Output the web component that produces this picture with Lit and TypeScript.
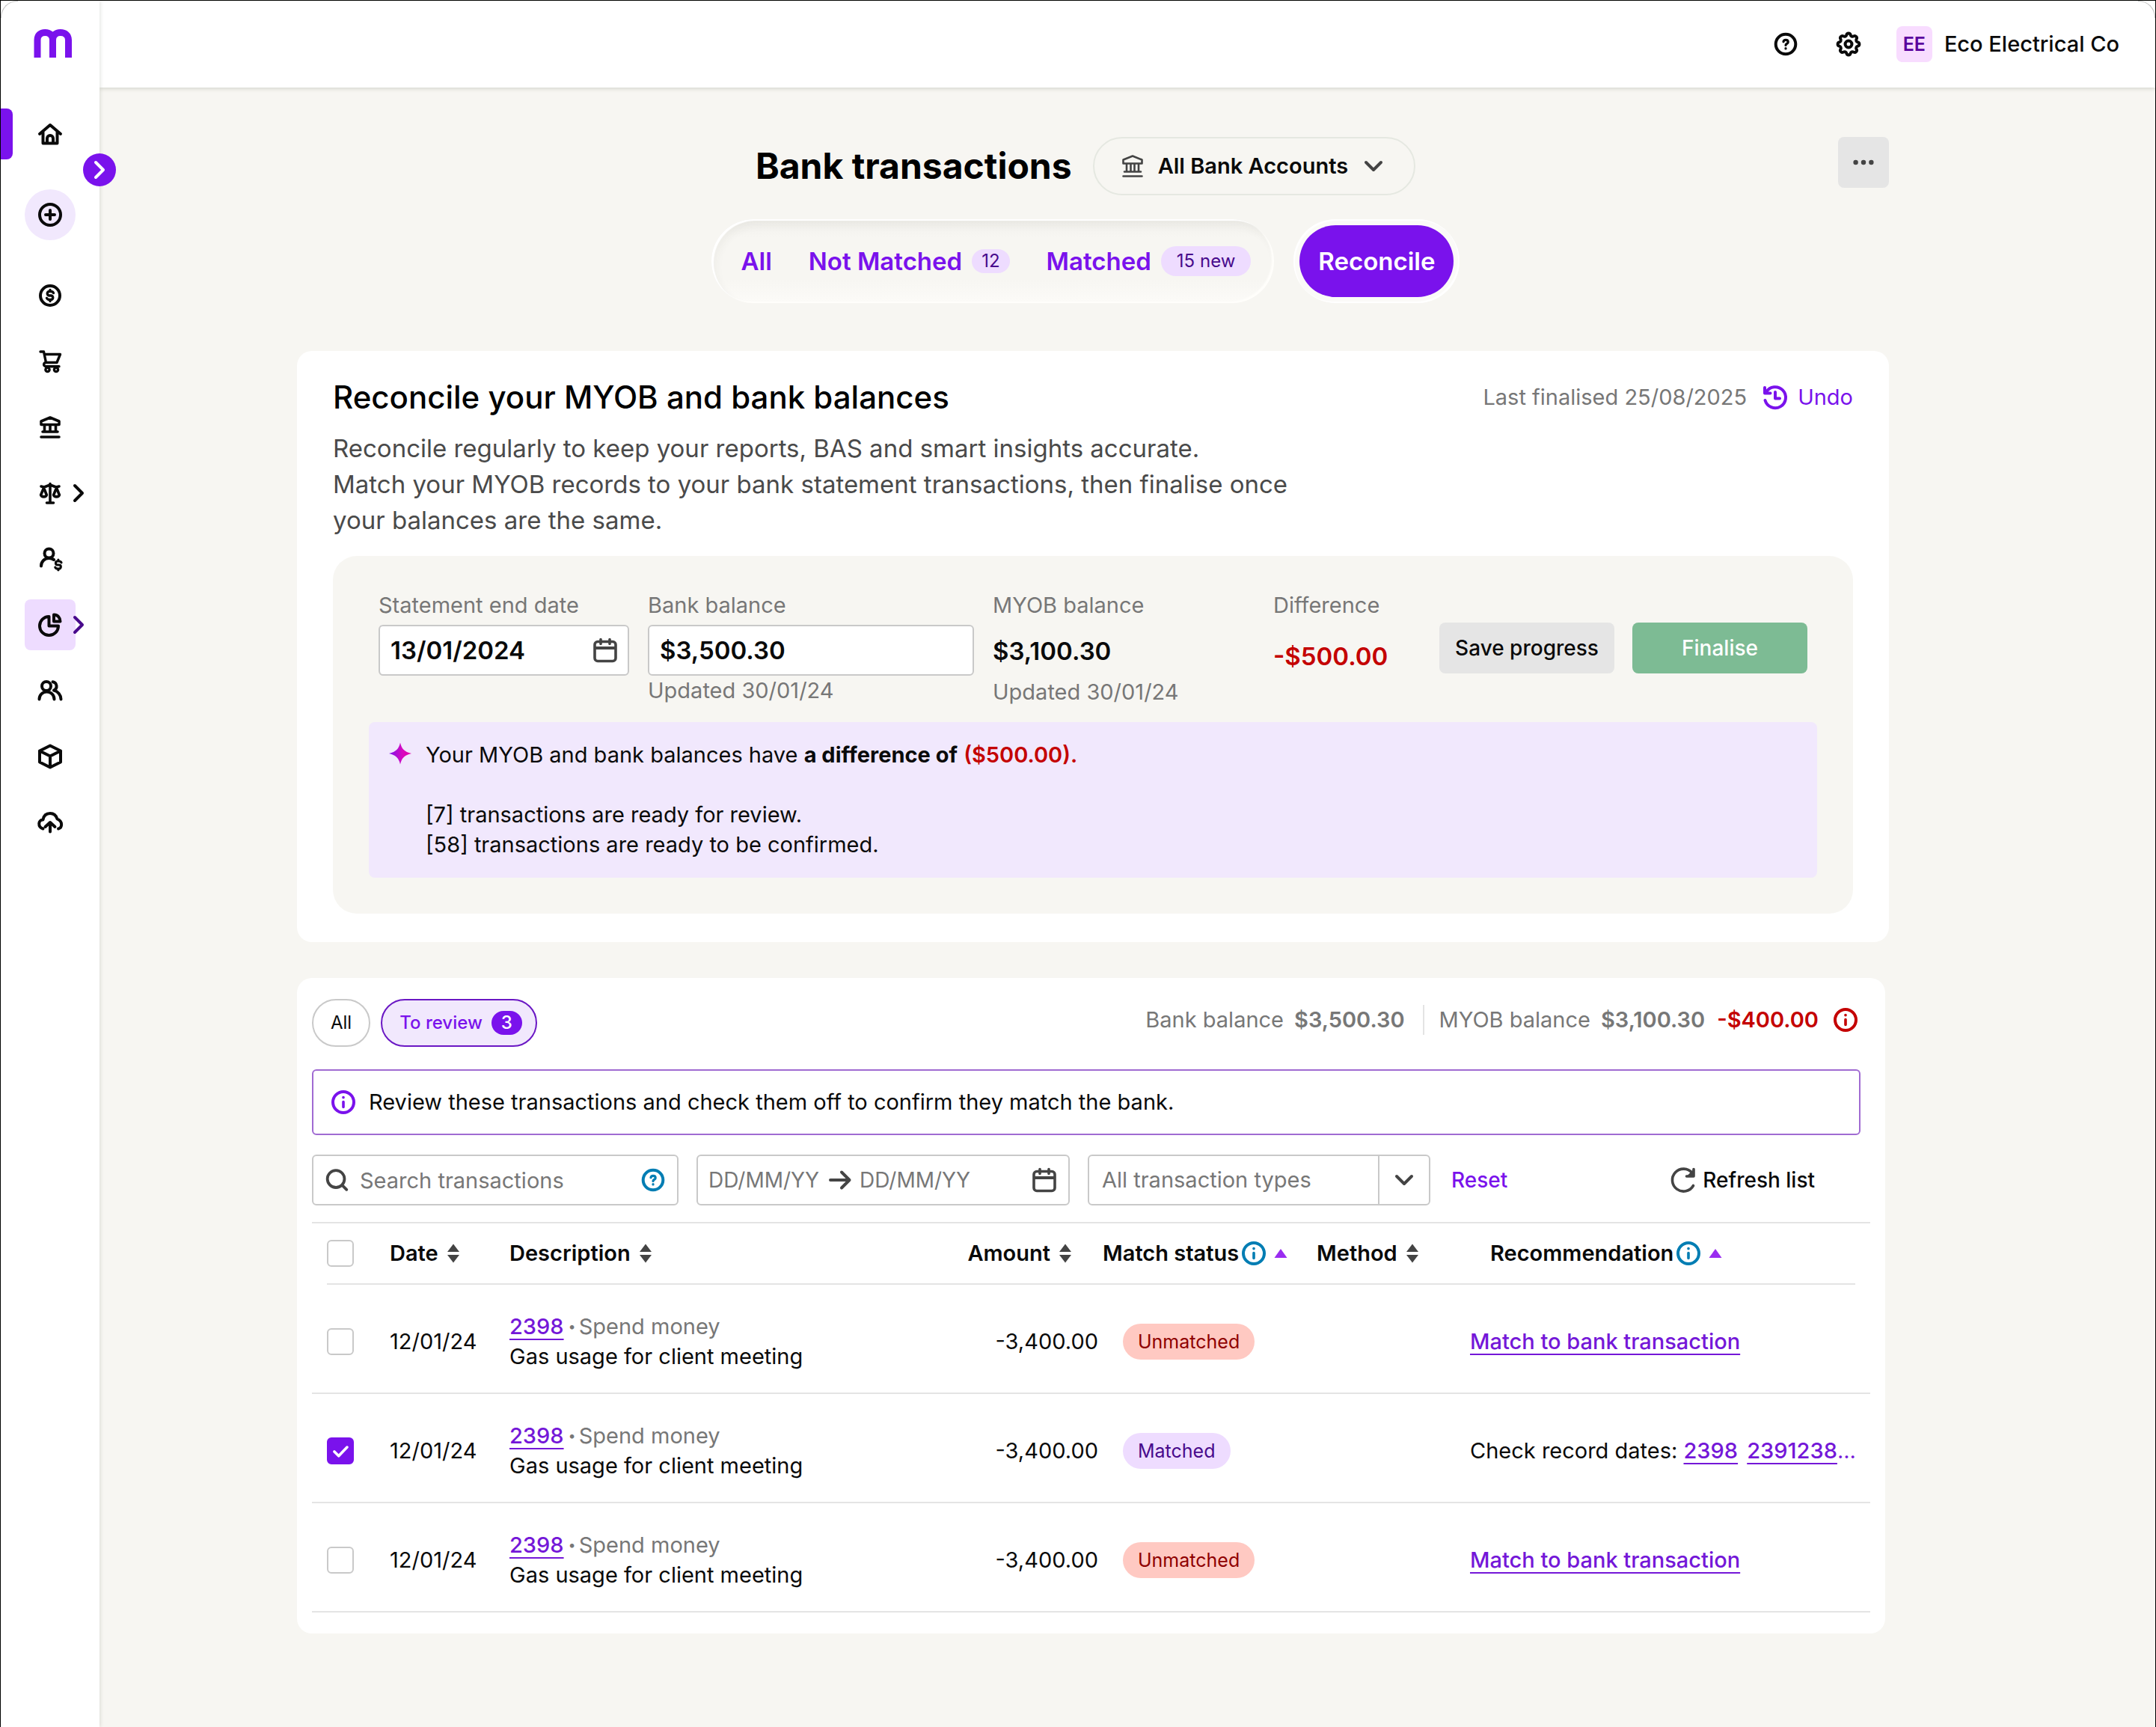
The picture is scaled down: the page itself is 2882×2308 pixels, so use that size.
import { LitElement, html, css, svg, nothing } from "lit";
import type { SVGTemplateResult } from "lit";
import { customElement, state } from "lit/decorators.js";
import { classMap } from "lit/directives/class-map.js";

/* Icon drawings on a shared 40 x 40 grid. */
const dollar = svg`<path d="M24.5 16.6c-.6-1.3-1.8-2.1-3.5-2.1h-2a2.75 2.75 0 0 0 0 5.5h2a2.75 2.75 0 0 1 0 5.5h-2c-1.7 0-2.900-.8-3.5-2.1M20 12.5v2M20 25.5v2" stroke-width="3.4"/>`;

const ICONS: Record<string, SVGTemplateResult> = {
  home: svg`<path d="M6 20 20 8l14 12M10.5 17v15.5h19V17M16 32v-6a4 4 0 0 1 8 0v6"/>`,
  plus: svg`<circle cx="20" cy="20" r="14"/><path d="M14 20h12M20 14v12"/>`,
  dollar: svg`<circle cx="20" cy="20" r="13"/>${dollar}`,
  cart: svg`<path stroke-width="3.4" d="M7 7h4.5l3 14.5H29l4.5-11H12.5M14.5 21.5a2.6 2.6 0 0 0-.5 5.2h18"/><circle cx="16.5" cy="31" r="2.6" stroke-width="3.4"/><circle cx="28" cy="31" r="2.6" stroke-width="3.4"/>`,
  bank: svg`<path stroke-width="3.6" d="M8 16.5v-4.5L20 7l12 5v4.5zM12.5 17v9M20 17v9M27.5 17v9M10 26h20M8 33h24"/>`,
  bankThin: svg`<path stroke-width="2.6" d="M7.500 16.500v-5L20 6.500l12.500 5v5zM12 17v10M17.500 17v10M22.500 17v10M28 17v10M9 27.500h22M7.500 33.500h25"/>`,
  scales: svg`<path stroke-width="3.6" d="M20 7.5V32M15.5 33h9M8 11l4 1 8-3 8 3 4-1M11.5 13 7.6 22.5a4 3 0 0 0 7.8 0zM28.5 13l-3.900 9.5a4 3 0 0 0 7.8 0z"/>`,
  payee: svg`<circle cx="18.5" cy="12.5" r="6"/><path d="M8 29.5c0-6 4.5-10.5 10.5-10.5 2.5 0 4.5.6 6.5 2"/><g transform="translate(12.500 9.600) scale(.92)">${dollar}</g>`,
  pie: svg`<path d="M18.5 9v12.5H31A12.5 12.5 0 1 1 18.5 9z"/><path d="M25 6.5V15.5h8.5c0-5-3.5-9-8.5-9z"/>`,
  people: svg`<circle cx="15" cy="14" r="6"/><path d="M5.5 31.5a10 10 0 0 1 20 0M23.5 8.2a6 6 0 0 1 1.5 11.4c5.5 1.4 9.5 6.2 9.5 11.9"/>`,
  box: svg`<path d="m20 5.5 14 7v15l-14 7-14-7v-15zM6 12.5l14 7 14-7M20 19.5v15"/>`,
  cloud: svg`<path d="M10.5 28.5C3 26 4 16.500 10.500 16.500 11.500 10.500 15.500 8 20 8c5 0 8 2.500 9.500 7.500C37 18.500 36.500 27 31 28.500M20 32.500V20.500M13.500 26l6.500-6 6.500 6"/>`,
  help: svg`<circle cx="20" cy="20" r="13.3"/><path stroke-width="3.2" d="M17 16.8c.3-1.6 1.5-2.4 3-2.4 1.8 0 3.2 1.1 3.2 2.8 0 2.3-3.2 2.2-3.2 4.3M20 25.6v.4"/>`,
  info: svg`<circle cx="20" cy="20" r="14"/><path stroke-width="3.6" d="M20 19.5v7M20 13.5v.3"/>`,
  gear: svg`<g transform="translate(.8 .8) scale(1.6)" stroke-width="2.5"><path d="M10.325 4.317c.426-1.756 2.924-1.756 3.35 0a1.724 1.724 0 0 0 2.573 1.066c1.543-.94 3.31.826 2.37 2.37a1.724 1.724 0 0 0 1.065 2.572c1.756.426 1.756 2.924 0 3.35a1.724 1.724 0 0 0-1.066 2.573c.94 1.543-.826 3.31-2.37 2.37a1.724 1.724 0 0 0-2.572 1.065c-.426 1.756-2.924 1.756-3.35 0a1.724 1.724 0 0 0-2.573-1.066c-1.543.94-3.31-.826-2.37-2.37a1.724 1.724 0 0 0-1.065-2.572c-1.756-.426-1.756-2.924 0-3.35a1.724 1.724 0 0 0 1.066-2.573c-.94-1.543.826-3.31 2.37-2.37 1 .608 2.296.07 2.572-1.065z"/><circle cx="12" cy="12" r="2.8"/></g>`,
  dots: svg`<g fill="currentColor" stroke="none"><circle cx="7" cy="20" r="4"/><circle cx="20" cy="20" r="4"/><circle cx="33" cy="20" r="4"/></g>`,
  right: svg`<path d="m15 10 10 10-10 10"/>`,
  down: svg`<path d="m10 15 10 10 10-10"/>`,
  history: svg`<path d="M8 13A14 14 0 1 1 6.5 24M6 7v7.5h7.5M20 13v8.5h6"/>`,
  calendar: svg`<rect x="6" y="8.5" width="28" height="26" rx="4" stroke-width="3.6"/><path stroke-width="4" d="M7 17h26"/><path stroke-width="3.6" d="M14 5.5v6M26 5.5v6"/>`,
  search: svg`<circle cx="19" cy="18.5" r="12"/><path d="m28 27.5 6 6"/>`,
  arrow: svg`<path d="M7 20h25M22 9.5 32.5 20 22 30.5"/>`,
  refresh: svg`<path d="M33.5 27.5A15 15 0 1 1 32 10.5M34 5.5v9.5h-9.5" stroke-width="3.6"/><path d="M34 7v8h-8z" fill="currentColor" stroke-width="2"/>`,
  check: svg`<path d="m11 21 6.5 6.5L30 14.5"/>`,
  sort: svg`<g fill="currentColor" stroke="none"><path d="m20 7.5 8 10.5H12zM20 32.5 12 22h16z"/></g>`,
};

const icon = (name: string, size = 40) => html`<svg
  width=${size}
  height=${size}
  viewBox="0 0 40 40"
  fill="none"
  stroke="currentColor"
  stroke-width="4"
  stroke-linecap="round"
  stroke-linejoin="round"
  aria-hidden="true"
>${ICONS[name]}</svg>`;

interface NavEntry { icon: string; label: string; kind?: string; more?: boolean }

const NAV: NavEntry[] = [
  { icon: "home", label: "Home", kind: "home" },
  { icon: "plus", label: "Create new", kind: "create" },
  { icon: "dollar", label: "Sales" },
  { icon: "cart", label: "Purchases" },
  { icon: "bank", label: "Banking" },
  { icon: "scales", label: "Accounting", more: true },
  { icon: "payee", label: "Payroll" },
  { icon: "pie", label: "Reporting", kind: "current", more: true },
  { icon: "people", label: "Contacts" },
  { icon: "box", label: "Inventory" },
  { icon: "cloud", label: "Uploads" },
];

interface Transaction { date: string; ref: string; amount: string; matched: boolean; checks?: string[] }

@customElement("app-root")
export class AppRoot extends LitElement {
  @state() private rows: Transaction[] = [
    { date: "12/01/24", ref: "2398", amount: "-3,400.00", matched: false },
    { date: "12/01/24", ref: "2398", amount: "-3,400.00", matched: true, checks: ["2398", "2391238"] },
    { date: "12/01/24", ref: "2398", amount: "-3,400.00", matched: false },
  ];

  static styles = css`
    :host {
      --purple: #7a12ec;
      --link: #7417d8;
      --ink: #0a0a0a;
      --grey: #777;
      --icon: #444;
      --red: #c40000;
      --blue: #007db3;
      --page: #f7f6f2;
      --line: #c9c9c9;
      --rule: #e4e4e4;
      display: block;
      font: 400 29px/40px Inter, "Liberation Sans", sans-serif;
      color: var(--ink);
    }
    * { box-sizing: border-box; }
    svg { display: block; flex: none; }
    a { color: inherit; text-decoration: none; }
    button, input, select { font: inherit; color: inherit; margin: 0; }
    button { border: 0; padding: 0; background: none; cursor: pointer; }
    h1, h2, p { margin: 0; }
    .muted { color: var(--grey); }
    .red { color: var(--red); }
    .strong { font-weight: 600; }

    .frame {
      position: relative;
      display: grid;
      grid-template-columns: 132px minmax(0, 1fr);
      min-height: 100vh;
      border: 1px solid #000;
      border-bottom: 0;
      background: #fff;
    }
    .frame::before, .frame::after {
      content: "";
      position: absolute;
      z-index: 4;
      top: 0;
      width: 22px;
      height: 22px;
      border-top: 1px solid #c4c4c4;
    }
    .frame::before { left: 0; border-left: 1px solid #c4c4c4; border-top-left-radius: 22px; }
    .frame::after { right: 0; border-right: 1px solid #c4c4c4; border-top-right-radius: 22px; }

    .side {
      position: relative;
      z-index: 2;
      background: #fff;
      box-shadow: 1px 0 5px rgba(40, 50, 30, 0.14);
      padding-top: 38px;
    }
    .logo { display: block; margin: 0 0 68px 44px; width: 52px; }
    .nav { display: grid; gap: 20px; margin: 0; padding: 0; list-style: none; }
    .item { display: grid; grid-template-columns: 32px 68px 32px; align-items: center; height: 68px; }
    .tile { display: grid; place-items: center; height: 68px; grid-column: 2; }
    .chev { margin-left: -16px; }
    .home, .create { margin-bottom: 20px; }
    .home::before {
      content: "";
      width: 16px;
      height: 68px;
      border-radius: 0 8px 8px 0;
      background: var(--purple);
    }
    .create .tile { border-radius: 50%; background: #f1e8fd; }
    .current .tile { border-radius: 8px; background: #eedcff; }
    .current .chev { color: #480a8c; }
    .toggle {
      position: absolute;
      right: -22px;
      top: 204px;
      display: grid;
      place-items: center;
      width: 44px;
      height: 44px;
      border-radius: 50%;
      color: #fff;
      background: var(--purple);
    }

    .body { display: flex; flex-direction: column; background: var(--page); }
    .top {
      position: relative;
      z-index: 1;
      display: flex;
      align-items: center;
      justify-content: flex-end;
      height: 116px;
      padding-right: 48px;
      background: #fff;
      box-shadow: 0 1px 6px rgba(40, 50, 30, 0.2);
    }
    .top button { display: grid; place-items: center; margin-right: 44px; }
    .org { display: flex; align-items: center; gap: 16px; font-weight: 500; }
    .avatar {
      display: grid;
      place-items: center;
      width: 48px;
      height: 48px;
      border-radius: 8px;
      font-size: 25px;
      font-weight: 600;
      color: #5a009d;
      background: #f8dcff;
    }

    main { padding: 66px 356px 120px 264px; }
    .head { display: grid; grid-template-columns: 1fr auto 1fr; align-items: start; }
    .title { display: flex; align-items: center; gap: 28px; grid-column: 2; margin-right: 20px; }
    h1 { font-size: 48px; line-height: 56px; font-weight: 700; color: #000; }
    .account {
      display: flex;
      align-items: center;
      gap: 14px;
      height: 78px;
      padding: 0 34px 0 31px;
      border: 2px solid #e5e8e1;
      border-radius: 39px;
      font-weight: 600;
    }
    .account svg { color: var(--icon); }
    .more {
      display: grid;
      place-items: center;
      justify-self: end;
      width: 68px;
      height: 68px;
      border-radius: 8px;
      color: var(--icon);
      background: #e5e5e5;
    }

    .tabs {
      display: flex;
      justify-content: center;
      gap: 26px;
      margin: 32px 20px 64px 0;
      font-size: 33px;
      font-weight: 600;
      color: var(--purple);
    }
    .group {
      display: flex;
      align-items: center;
      gap: 49px;
      height: 112px;
      padding: 0 31px 0 40px;
      border-radius: 56px;
      background: linear-gradient(#f1f0ec, var(--page) 24px, var(--page) 80px, #fcfbf8);
      box-shadow: inset 3px 2px 1px #fff, inset -3px -2px 2px #fffefb, inset 5px 8px 12px rgba(60, 60, 40, 0.05);
    }
    .tab { display: flex; align-items: center; gap: 13px; }
    .count {
      padding: 0 13px;
      border-radius: 20px;
      font-size: 24px;
      line-height: 32px;
      font-weight: 400;
      color: #480a8c;
      background: #eedcff;
    }
    .count.wide { padding: 0 21px; line-height: 40px; }
    .active { padding: 8px; border-radius: 56px; background: #fbfaf8; box-shadow: inset 2px 2px 1px #fff, inset -2px -2px 1px #fff; }
    .active button {
      height: 96px;
      padding: 0 25px;
      border-radius: 48px;
      color: #fff;
      background: var(--purple);
    }

    .card { border-radius: 20px; background: #fff; }
    .summary { padding: 38px 48px; }
    .cardhead { display: flex; align-items: center; justify-content: space-between; }
    h2 { font-size: 42px; line-height: 48px; font-weight: 500; color: #000; }
    .last { display: flex; align-items: center; gap: 18px; }
    .undo { display: flex; align-items: center; gap: 10px; color: var(--purple); }
    .intro { margin: 20px 0 24px; font-size: 33px; line-height: 48px; color: #4a4a4a; }
    .panel { padding: 46px 48px 48px; border-radius: 32px; background: var(--page); }
    .fields {
      display: grid;
      grid-template-columns: 335px 436px 350px minmax(0, 1fr) auto;
      gap: 25px;
      padding: 0 13px;
      margin-bottom: 20px;
    }
    .field { display: flex; flex-direction: column; }
    .field label, .field .name { color: var(--grey); margin-bottom: 6px; }
    .box {
      display: flex;
      align-items: center;
      height: 68px;
      border: 2px solid var(--line);
      border-radius: 6px;
      background: #fff;
      color: var(--icon);
    }
    .box input { flex: 1; min-width: 0; width: 0; height: 100%; padding: 0; border: 0; outline: 0; background: none; }
    .box input::placeholder { color: var(--grey); opacity: 1; }
    .field .box { padding: 0 10px 0 14px; }
    .field .box input, .value { font-size: 33px; font-weight: 600; color: var(--ink); }
    .value { line-height: 70px; }
    .value.diff { line-height: 84px; color: var(--red); }
    .actions { display: flex; gap: 24px; padding-top: 43px; }
    .actions button { width: 234px; height: 68px; border-radius: 8px; font-size: 28px; font-weight: 500; background: #e5e5e5; }
    .actions .finalise { color: #fff; background: #7dbb94; }
    .note { display: flex; gap: 14px; padding: 24px 22px; border-radius: 8px; background: #f1e8fd; }
    .note p { min-height: 40px; }

    .list { margin: 48px 5px 0 0; padding: 28px 20px; }
    .bar { display: flex; align-items: center; justify-content: space-between; padding-right: 13px; }
    .pills { display: flex; gap: 14px; }
    .pill {
      display: flex;
      align-items: center;
      gap: 12px;
      height: 64px;
      padding: 0 23px;
      border: 2px solid var(--line);
      border-radius: 32px;
      font-size: 24px;
    }
    .pill.on { padding-right: 18px; border-color: #6a17c4; font-weight: 500; color: var(--purple); background: #f1e8fd; }
    .num { padding: 0 13px; border-radius: 16px; line-height: 32px; color: #fff; background: var(--purple); }
    .balances { display: flex; align-items: center; gap: 16px; padding-bottom: 8px; color: var(--grey); }
    .balances .part + .part { margin-left: 8px; padding-left: 20px; border-left: 2px solid var(--rule); }
    .part { display: flex; gap: 14px; }
    .balances .red { color: var(--red); }
    .review {
      display: flex;
      align-items: center;
      gap: 14px;
      height: 88px;
      margin: 30px 13px 26px 0;
      padding-left: 20px;
      border: 2px solid #a06bd2;
      border-radius: 6px;
    }
    .review svg { color: var(--purple); }
    .filters { display: flex; align-items: center; margin-bottom: 22px; gap: 24px; }
    .search { width: 490px; padding: 0 12px; gap: 12px; }
    .blue { color: var(--blue); }
    .range { width: 499px; padding: 0 12px 0 14px; gap: 6px; font-size: 28px; }
    .range input { flex: none; width: 150px; }
    .range .cal { margin-left: auto; }
    .pick { display: grid; grid-template-columns: minmax(0, 1fr) 68px; width: 458px; }
    .pick select {
      grid-area: 1 / 1 / 2 / 3;
      appearance: none;
      height: 100%;
      padding: 0 17px;
      border: 0;
      color: var(--grey);
      background: none;
    }
    .pick .drop { grid-area: 1 / 2; display: grid; place-items: center; height: 64px; border-left: 2px solid var(--line); pointer-events: none; }
    .reset { margin-left: 4px; font-size: 28px; font-weight: 500; color: var(--purple); }
    .refresh { display: flex; align-items: center; gap: 6px; margin: 0 74px 0 auto; font-size: 28px; font-weight: 500; }
    .refresh svg { color: var(--icon); }

    table { width: 100%; table-layout: fixed; border-collapse: collapse; }
    .c-check { width: 104px; }
    .c-date { width: 160px; }
    .c-amount { width: 240px; }
    .c-status { width: 286px; }
    .c-method { width: 205px; }
    .c-rec { width: 535px; }
    th, td { padding: 0; text-align: left; vertical-align: middle; white-space: nowrap; }
    th { font-weight: 600; }
    thead tr {
      height: 84px;
      background:
        linear-gradient(var(--rule), var(--rule)) 0 0 / 100% 2px no-repeat,
        linear-gradient(var(--rule), var(--rule)) 20px 100% / calc(100% - 40px) 2px no-repeat;
    }
    tbody tr { height: 146px; background: linear-gradient(var(--rule), var(--rule)) 0 100% / 100% 2px no-repeat; }
    tbody td { padding-top: 6px; }
    .sort { display: inline-flex; align-items: center; font: inherit; color: var(--ink); }
    .sort > svg { color: var(--icon); }
    .asc { color: #9a2cf0; }
    th.amount { padding-right: 30px; text-align: right; }
    td.amount { padding-right: 6px; text-align: right; }
    td.status { padding-left: 27px; }
    th.rec { padding-left: 27px; }
    .tick { display: grid; width: 36px; margin-left: 20px; color: #fff; }
    .tick input {
      grid-area: 1 / 1;
      appearance: none;
      width: 36px;
      height: 36px;
      border: 2px solid var(--line);
      border-radius: 6px;
      background: #fff;
    }
    .tick input:checked { border-color: var(--purple); background: var(--purple); }
    .tick svg { grid-area: 1 / 1; pointer-events: none; }
    .link { font-weight: 500; color: var(--link); text-decoration: underline; text-decoration-thickness: 2px; text-underline-offset: 6px; }
    .dot { padding: 0 4px 0 6px; font-size: 18px; vertical-align: 4px; }
    .line { height: 40px; }
    .tag { display: inline-block; padding: 0 20px; border-radius: 24px; font-size: 25px; line-height: 48px; color: #8f0000; background: #ffc9c2; vertical-align: middle; }
    .tag.matched { color: #480a8c; background: #eedcff; }
    .refs { margin-right: 4px; }
    .rest { color: var(--link); }
  `;

  private nav(entry: NavEntry) {
    const classes = { item: true, home: entry.kind === "home", create: entry.kind === "create", current: entry.kind === "current" };
    return html`<li>
      <a class=${classMap(classes)} href="#" aria-label=${entry.label}>
        <span class="tile">${icon(entry.icon)}</span>
        ${entry.more ? html`<span class="chev">${icon("right")}</span>` : nothing}
      </a>
    </li>`;
  }

  private tick(label: string, checked: boolean) {
    return html`<label class="tick">
      <input type="checkbox" aria-label=${label} .checked=${checked} />
      ${checked ? icon("check", 36) : nothing}
    </label>`;
  }

  private asc() {
    return html`<svg class="asc" width="32" height="40" viewBox="4 0 32 40" aria-hidden="true">
      <path fill="currentColor" d="m20 14 8.500 12h-17z" />
    </svg>`;
  }

  private row(t: Transaction, index: number) {
    return html`<tr>
      <td>${this.tick(`Select transaction ${index + 1}`, t.matched)}</td>
      <td>${t.date}</td>
      <td>
        <div class="line"><a class="link" href="#">${t.ref}</a><span class="muted"><span class="dot">•</span>Spend money</span></div>
        <div class="line">Gas usage for client meeting</div>
      </td>
      <td class="amount">${t.amount}</td>
      <td class="status">
        <span class=${classMap({ tag: true, matched: t.matched })}>${t.matched ? "Matched" : "Unmatched"}</span>
      </td>
      <td></td>
      <td>
        ${t.checks
          ? html`Check record dates: <a class="link refs" href="#">${t.checks[0]}</a> <a class="link" href="#">${t.checks[1]}</a><span class="rest">...</span>`
          : html`<a class="link" href="#">Match to bank transaction</a>`}
      </td>
    </tr>`;
  }

  render() {
    return html`<div class="frame">
      <aside class="side">
        <a class="logo" href="#" aria-label="Dashboard">
          <svg width="52" height="38" viewBox="0 0 52 38" fill="none" stroke="#7a12ec" stroke-width="9" aria-hidden="true">
            <path d="M5 38V14.500C5 8 9 4.500 15.250 4.500S25.500 8 25.500 14.500V38M25.500 38V14.500C25.500 8 29.500 4.500 35.750 4.500S46.500 8 46.500 14.500V38" />
          </svg>
        </a>
        <nav aria-label="Main"><ul class="nav">${NAV.map((entry) => this.nav(entry))}</ul></nav>
        <button class="toggle" aria-label="Expand menu">${icon("right")}</button>
      </aside>

      <div class="body">
        <header class="top">
          <button aria-label="Help">${icon("help")}</button>
          <button aria-label="Settings">${icon("gear")}</button>
          <a class="org" href="#"><span class="avatar">EE</span>Eco Electrical Co</a>
        </header>

        <main>
          <div class="head">
            <div class="title">
              <h1>Bank transactions</h1>
              <button class="account">${icon("bankThin")}All Bank Accounts${icon("down")}</button>
            </div>
            <button class="more" aria-label="More actions">${icon("dots", 32)}</button>
          </div>

          <nav class="tabs" aria-label="Transactions">
            <div class="group">
              <a class="tab" href="#">All</a>
              <a class="tab" href="#">Not Matched<span class="count">12</span></a>
              <a class="tab" href="#">Matched<span class="count wide">15 new</span></a>
            </div>
            <div class="active"><button>Reconcile</button></div>
          </nav>

          <section class="card summary">
            <div class="cardhead">
              <h2>Reconcile your MYOB and bank balances</h2>
              <div class="last">
                <span class="muted">Last finalised 25/08/2025</span>
                <button class="undo">${icon("history")}Undo</button>
              </div>
            </div>
            <p class="intro">
              Reconcile regularly to keep your reports, BAS and smart insights accurate.<br />
              Match your MYOB records to your bank statement transactions, then finalise once<br />
              your balances are the same.
            </p>
            <div class="panel">
              <div class="fields">
                <div class="field">
                  <label for="end-date">Statement end date</label>
                  <div class="box"><input id="end-date" type="text" value="13/01/2024" />${icon("calendar")}</div>
                </div>
                <div class="field">
                  <label for="bank-balance">Bank balance</label>
                  <div class="box"><input id="bank-balance" type="text" value="$3,500.30" /></div>
                  <span class="muted">Updated 30/01/24</span>
                </div>
                <div class="field">
                  <span class="name">MYOB balance</span>
                  <span class="value">$3,100.30</span>
                  <span class="muted">Updated 30/01/24</span>
                </div>
                <div class="field">
                  <span class="name">Difference</span>
                  <span class="value diff">-$500.00</span>
                </div>
                <div class="actions">
                  <button>Save progress</button>
                  <button class="finalise">Finalise</button>
                </div>
              </div>
              <div class="note">
                <svg class="spark" width="40" height="36" viewBox="0 0 40 36" aria-hidden="true">
                  <defs>
                    <linearGradient id="spark">
                      <stop offset="0" stop-color="#7a12ec" />
                      <stop offset=".6" stop-color="#d80abf" />
                      <stop offset="1" stop-color="#e600a8" />
                    </linearGradient>
                  </defs>
                  <path fill="url(#spark)" d="M20 3.500c2 8.500 5.500 12 15 14.500-9.500 2.500-13 6-15 14.500-2-8.500-5.500-12-15-14.500 9.500-2.500 13-6 15-14.500z" />
                </svg>
                <div>
                  <p>Your MYOB and bank balances have <b>a difference of</b> <b class="red strong">($500.00).</b></p>
                  <p></p>
                  <p>[7] transactions are ready for review.</p>
                  <p>[58] transactions are ready to be confirmed.</p>
                </div>
              </div>
            </div>
          </section>

          <section class="card list">
            <div class="bar">
              <div class="pills">
                <button class="pill">All</button>
                <button class="pill on">To review<span class="num">3</span></button>
              </div>
              <div class="balances">
                <span class="part">Bank balance<span class="strong">$3,500.30</span></span>
                <span class="part">MYOB balance<span class="strong">$3,100.30</span></span>
                <span class="strong red">-$400.00</span>
                <span class="red">${icon("info")}</span>
              </div>
            </div>

            <div class="review">${icon("info")}<span>Review these transactions and check them off to confirm they match the bank.</span></div>

            <div class="filters">
              <div class="box search">
                ${icon("search", 38)}
                <input type="search" aria-label="Search transactions" placeholder="Search transactions" />
                <span class="blue">${icon("help")}</span>
              </div>
              <div class="box range">
                <input type="text" aria-label="From date" placeholder="DD/MM/YY" />
                ${icon("arrow")}
                <input type="text" aria-label="To date" placeholder="DD/MM/YY" />
                <span class="cal">${icon("calendar")}</span>
              </div>
              <div class="box pick">
                <select aria-label="Transaction type"><option>All transaction types</option></select>
                <span class="drop">${icon("down")}</span>
              </div>
              <button class="reset">Reset</button>
              <button class="refresh">${icon("refresh")}Refresh list</button>
            </div>

            <table>
              <colgroup>
                <col class="c-check" /><col class="c-date" /><col /><col class="c-amount" />
                <col class="c-status" /><col class="c-method" /><col class="c-rec" />
              </colgroup>
              <thead>
                <tr>
                  <th>${this.tick("Select all transactions", false)}</th>
                  <th><button class="sort">Date${icon("sort")}</button></th>
                  <th><button class="sort">Description${icon("sort")}</button></th>
                  <th class="amount"><button class="sort">Amount${icon("sort")}</button></th>
                  <th><button class="sort">Match status<span class="blue">${icon("info")}</span><span>${this.asc()}</span></button></th>
                  <th><button class="sort">Method${icon("sort")}</button></th>
                  <th class="rec"><button class="sort">Recommendation<span class="blue">${icon("info")}</span><span>${this.asc()}</span></button></th>
                </tr>
              </thead>
              <tbody>${this.rows.map((t, i) => this.row(t, i))}</tbody>
            </table>
          </section>
        </main>
      </div>
    </div>`;
  }
}
